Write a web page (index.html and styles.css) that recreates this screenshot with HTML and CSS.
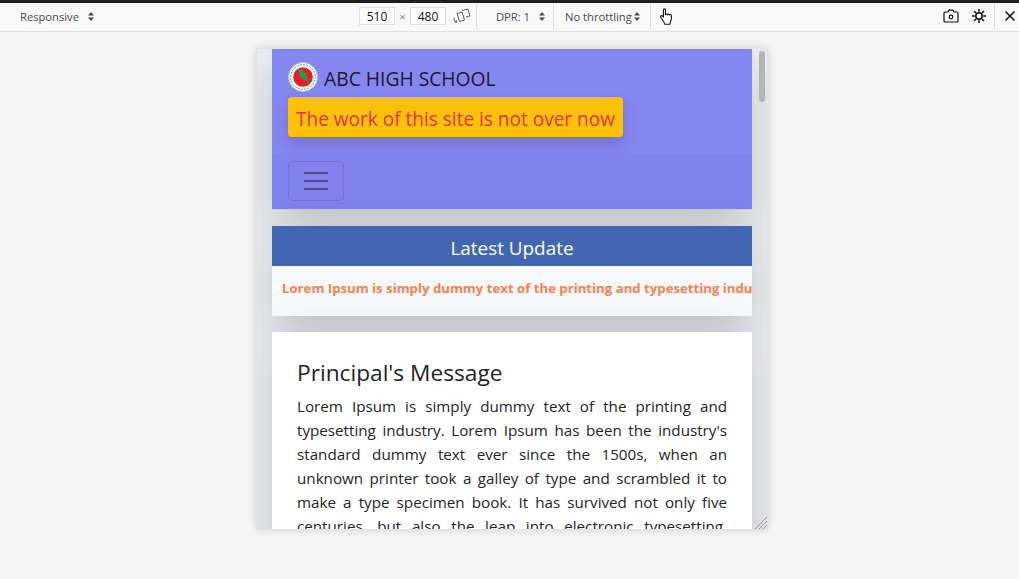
FILE: index.html
```html
<!DOCTYPE html>
<html lang="en">
<head>
    <meta charset="UTF-8">
    <title>ABC High School - Responsive</title>
    <link rel="stylesheet" href="styles.css">
</head>
<body>
<div class="toolbar">
    <div class="tb-mode">
        <span>Responsive</span>
        <svg class="updown" viewBox="0 0 6 9"><path d="M3 0l3 3.4H0zM3 9L0 5.6h6z"></path></svg>
    </div>
    <div class="tb-size">
        <span class="size-box">510</span>
        <span class="times">×</span>
        <span class="size-box">480</span>
        <svg class="rotate" viewBox="0 0 18 16" fill="none" stroke="#5a5a60" stroke-width="1">
            <path d="M9 2.500l6-1.500 1.800 7-3.800 1"></path>
            <path d="M4 5.500l5-1.500 2.500 8-5 1.500z" fill="#f9f9fa"></path>
            <path d="M1.200 9.500c-.6 2 .2 3.600 2.300 4.500M1.500 14l2 .2-.2-2"></path>
        </svg>
    </div>
    <div class="tb-dpr">
        <span>DPR: 1</span>
        <svg class="updown" viewBox="0 0 6 9"><path d="M3 0l3 3.400H0zM3 9L0 5.600h6z"></path></svg>
    </div>
    <div class="tb-throttle">
        <span>No throttling</span>
        <svg class="updown" viewBox="0 0 6 9"><path d="M3 0l3 3.400H0zM3 9L0 5.600h6z"></path></svg>
    </div>
    <div class="tb-touch">
        <svg viewBox="0 0 14 17" fill="#fff" stroke="#111" stroke-width="1.100" stroke-linejoin="round">
            <path d="M3.500 1.700c0-1.300 2-1.300 2 0v5c.2-1 1.900-1 2 .1.200-.9 1.800-.9 1.900.2.300-.8 1.800-.7 1.900.5.200 2 .2 4.300-.6 5.800-.4.900-.7 1.800-.7 3H4.800c-.2-1.600-.9-2.600-2-4L.8 9.200c-.7-1.100.7-2.200 1.700-1.200l1 1.200z"></path>
        </svg>
    </div>
    <div class="tb-end">
        <svg class="camera" viewBox="0 0 16 14" fill="none" stroke="#111" stroke-width="1.200">
            <path d="M1 4a1 1 0 0 1 1-1h3l1-1.800h4L11 3h3a1 1 0 0 1 1 1v8a1 1 0 0 1-1 1H2a1 1 0 0 1-1-1z"></path>
            <circle cx="8" cy="8" r="1.800"></circle>
        </svg>
        <svg class="gear" viewBox="0 0 14 14" fill="none" stroke="#111" stroke-width="1.500">
            <circle cx="7" cy="7" r="3.200"></circle>
            <path d="M7 0v2.800M7 11.200V14M0 7h2.800M11.200 7H14M2 2l2 2M10 10l2 2M12 2l-2 2M4 10l-2 2"></path>
        </svg>
        <div class="close-box">
            <svg viewBox="0 0 12 12" fill="none" stroke="#111" stroke-width="1.500"><path d="M1.500 1.500l9 9M10.500 1.500l-9 9"></path></svg>
        </div>
    </div>
</div>

<div class="viewport">
    <div class="page">
        <header class="site-header">
            <div class="brand">
                <svg class="logo" viewBox="0 0 30 30">
                    <circle cx="15" cy="15" r="14.500" fill="#fff" stroke="#a8c4b6" stroke-width="1"></circle>
                    <circle cx="15" cy="15" r="12.300" fill="none" stroke="#3aab76" stroke-width="1" stroke-dasharray="2 1.200"></circle>
                    <circle cx="15" cy="15" r="9.800" fill="#ec1c24"></circle>
                    <path d="M10.500 7l4 .5.500 3 3.500.5-.5 2.500 2 2-.5 1 1 4-1.500.5-1.500-3.500-1.500 1-1.500-3-3-.5.500-3-1.500-1.500z" fill="#12a150"></path>
                </svg>
                <span class="brand-name">ABC HIGH SCHOOL</span>
            </div>
            <div class="notice">The work of this site is not over now</div>
            <nav class="navbar">
                <button class="toggler">
                    <span class="bar"></span>
                    <span class="bar"></span>
                    <span class="bar"></span>
                </button>
            </nav>
        </header>

        <section class="update">
            <h2 class="update-title">Latest Update</h2>
            <div class="ticker"><b>Lorem Ipsum is simply dummy text of the printing and typesetting industry. Lorem Ipsum has been the industry's standard</b></div>
        </section>

        <section class="message">
            <h3>Principal's Message</h3>
            <p>Lorem Ipsum is simply dummy text of the printing and typesetting industry. Lorem Ipsum has been the industry's standard dummy text ever since the 1500s, when an unknown printer took a galley of type and scrambled it to make a type specimen book. It has survived not only five centuries, but also the leap into electronic typesetting, remaining essentially unchanged.</p>
        </section>
    </div>
    <div class="scroll-thumb"></div>
    <svg class="resizer" viewBox="0 0 12 12" stroke="#9a9a9e" stroke-width="1"><path d="M0 12L12 0M4 12l8-8M8 12l4-4"></path></svg>
</div>
</body>
</html>
```
FILE: styles.css
```css
* {
    box-sizing: border-box;
}

html, body {
    height: 100%;
}

body {
    margin: 0;
    overflow: hidden;
    font-family: "Open Sans", "Noto Sans", sans-serif;
    background: #f5f5f5;
    color: #212529;
}

/* devtools bar */
.toolbar {
    display: flex;
    align-items: center;
    height: 32px;
    padding-bottom: 2px;
    font-size: 11.2px;
    color: #4a4a4f;
    background: #f9f9fa;
    border-top: 3px solid #1f1f22;
    border-bottom: 1px solid #e0e0e2;
}

.toolbar > div {
    display: flex;
    align-items: center;
    height: 100%;
}

.updown {
    width: 6px;
    height: 9px;
    fill: #4a4a4f;
}

.tb-mode {
    width: 359px;
    padding-left: 20px;
    gap: 9px;
}

.tb-size {
    width: 118px;
    border-right: 1px solid #e0e0e2;
}

.size-box {
    width: 36px;
    height: 18px;
    line-height: 17px;
    text-align: center;
    font-size: 12px;
    color: #111;
    background: #fff;
    border: 1px solid #e0e0e2;
}

.times {
    width: 15px;
    text-align: center;
    color: #8a8a8f;
}

.rotate {
    width: 18px;
    height: 16px;
    margin-left: 7px;
}

.tb-dpr {
    width: 77px;
    padding-left: 19px;
    gap: 9px;
    border-right: 1px solid #e0e0e2;
}

.tb-throttle {
    width: 97px;
    padding-left: 11px;
    gap: 2px;
    border-right: 1px solid #e0e0e2;
}

.tb-touch {
    padding-left: 9px;
}

.tb-touch svg {
    width: 14px;
    height: 17px;
}

.tb-end {
    margin-left: auto;
    gap: 13px;
}

.camera {
    width: 16px;
    height: 14px;
}

.gear {
    width: 14px;
    height: 14px;
}

.close-box {
    display: flex;
    align-items: center;
    height: 100%;
    width: 25px;
    padding-left: 9px;
    margin-left: -5px;
    border-left: 1px solid #e0e0e2;
}

.close-box svg {
    width: 12px;
    height: 12px;
}

/* emulated viewport */
.viewport {
    position: relative;
    width: 512px;
    height: 482px;
    margin: 16px 0 0 256px;
    overflow: hidden;
    background: #fff;
    border: 1px solid #e3e3e5;
    box-shadow: 0 0 8px rgba(0, 0, 0, 0.14);
}

.page {
    height: 100%;
    padding: 0 15px;
    overflow: hidden;
    background: #eff0f4;
}

.site-header {
    height: 160px;
    background: #8686f1;
    box-shadow: 0 16px 48px rgba(0, 0, 0, 0.2);
}

.brand {
    display: flex;
    align-items: flex-start;
    gap: 6px;
    height: 48px;
    padding: 13px 0 0 16px;
}

.logo {
    width: 30px;
    height: 30px;
}

.brand-name {
    margin-top: 3px;
    font-size: 19.3px;
    color: #1a1a2e;
}

.notice {
    width: fit-content;
    height: 40px;
    margin-left: 16px;
    padding: 0 8px;
    line-height: 45px;
    font-size: 19.05px;
    color: #dc3545;
    background: #ffc107;
    border-radius: 4px;
    box-shadow: 0 8px 16px rgba(0, 0, 0, 0.15);
}

.navbar {
    height: 56px;
    margin-top: 16px;
    padding: 8px 16px;
    background: #8282ef;
}

.toggler {
    display: flex;
    flex-direction: column;
    align-items: center;
    justify-content: center;
    gap: 6px;
    width: 56px;
    height: 40px;
    padding: 0;
    background: transparent;
    border: 1px solid #7272d6;
    border-radius: 4px;
}

.bar {
    width: 24px;
    height: 2px;
    background: #4e4e96;
}

.update {
    margin-top: 17px;
    background: #f8f9fa;
    box-shadow: 0 16px 48px rgba(0, 0, 0, 0.2);
}

.update-title {
    height: 40px;
    margin: 0;
    line-height: 44px;
    text-align: center;
    font-size: 18.9px;
    font-weight: 400;
    color: #fff;
    background: #4267b2;
}

.ticker {
    height: 50px;
    padding: 13px 0 0 10px;
    overflow: hidden;
    white-space: nowrap;
    font-size: 13.2px;
    line-height: 18px;
    color: #ff7f50;
}

.message {
    height: 300px;
    margin-top: 16px;
    padding: 25px;
    background: #fff;
    box-shadow: 0 16px 48px rgba(0, 0, 0, 0.2);
}

.message h3 {
    margin: 0 0 5px;
    font-size: 22.7px;
    line-height: 32px;
    font-weight: 400;
}

.message p {
    margin: 0;
    font-size: 15.2px;
    line-height: 24px;
    text-align: justify;
    color: #212529;
}

/* things drawn over the page */
.scroll-thumb {
    position: absolute;
    top: 2px;
    right: 2px;
    width: 6px;
    height: 51px;
    border-radius: 3px;
    background: #b4b5b7;
}

.resizer {
    position: absolute;
    right: 0;
    bottom: 0;
    width: 12px;
    height: 12px;
}
```
